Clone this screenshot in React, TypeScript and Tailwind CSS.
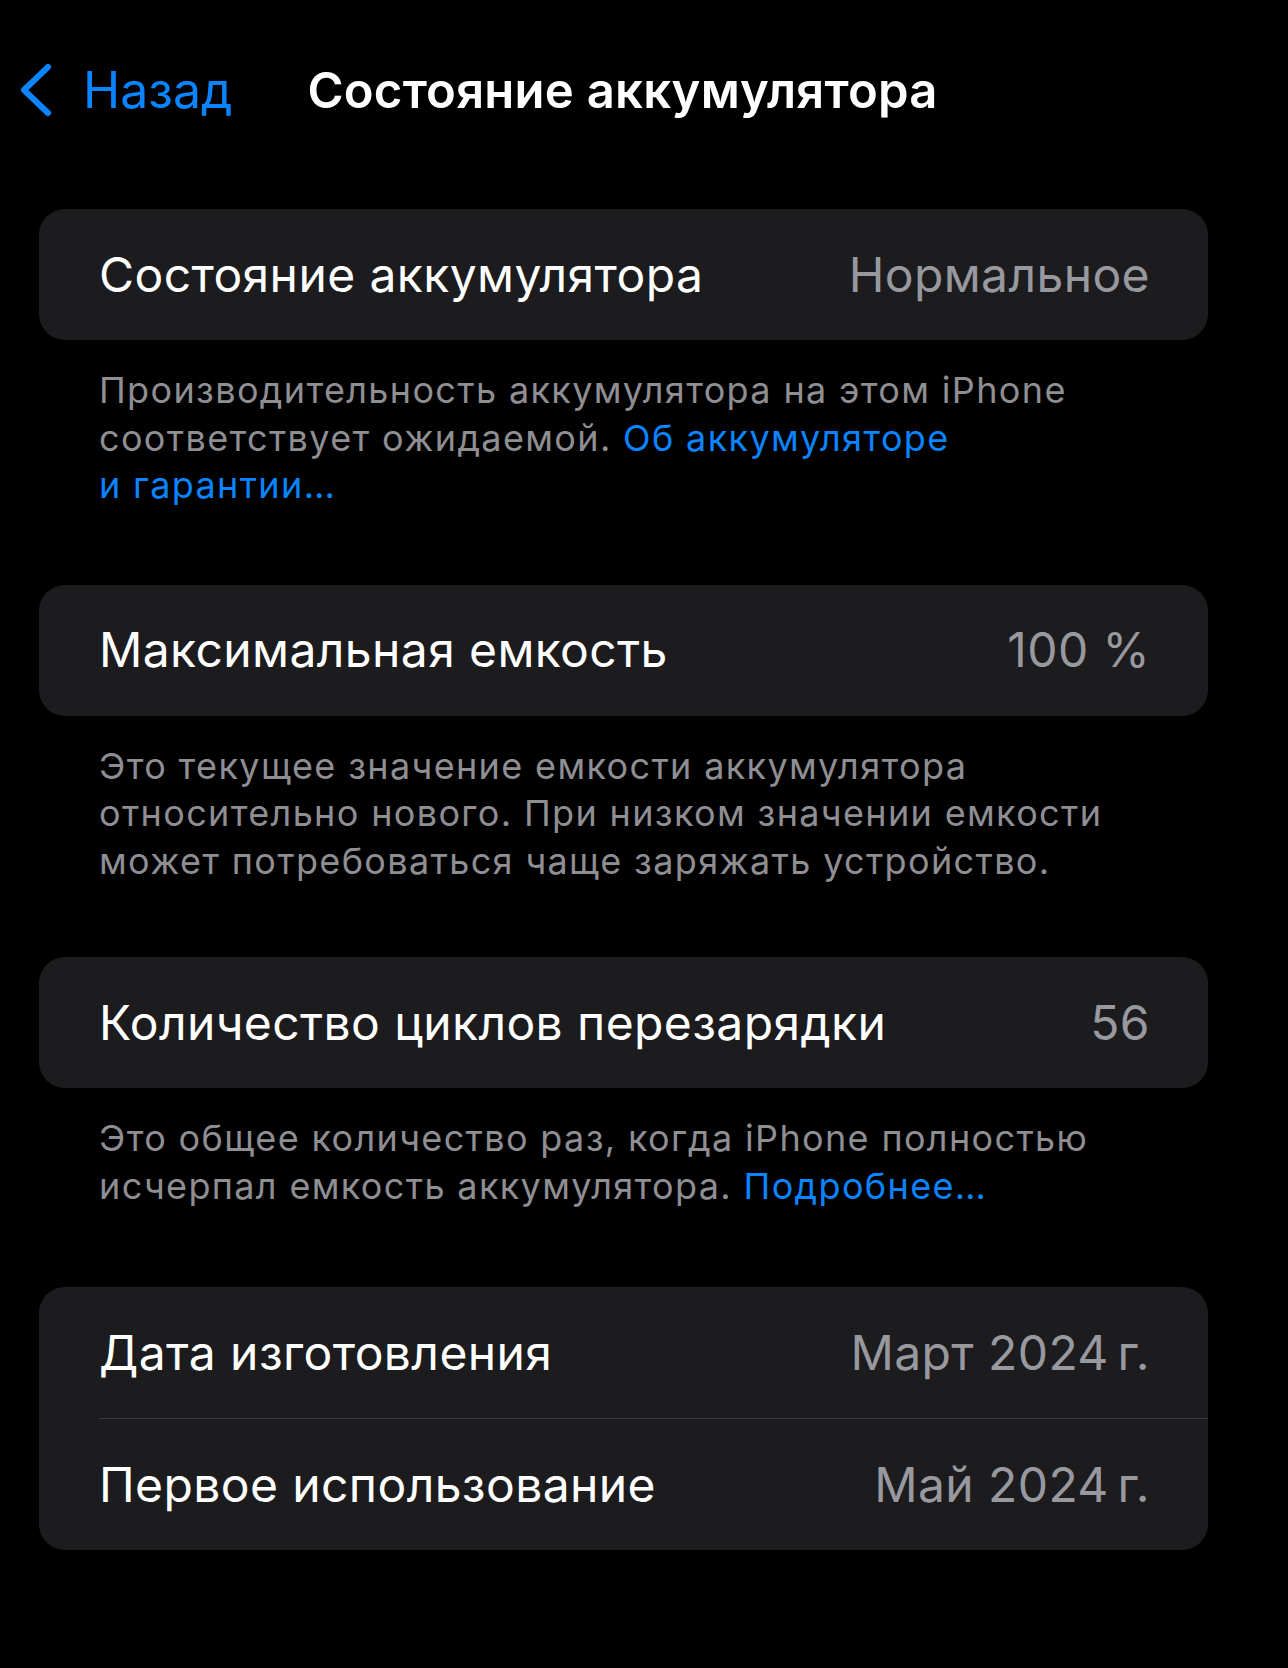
import React from 'react';

const font = { fontFamily: 'Inter, "Noto Sans", sans-serif' };

type Row = { label: string; value: string };

function Card({ rows }: { rows: Row[] }) {
  return (
    <div className="ml-[39px] w-[1169px] overflow-hidden rounded-[26px] bg-[#1c1c1e]">
      {rows.map((r, i) => (
        <div key={r.label}>
          {i > 0 && <div className="ml-[60px] h-px bg-[#38383a]" />}
          <div className="flex h-[131px] items-center justify-between pl-[60px] pr-[58px]">
            <span className="text-[48px] leading-none tracking-[0.4px] text-white">{r.label}</span>
            <span className="text-[48px] leading-none tracking-[0.4px] text-[#98989f]">{r.value}</span>
          </div>
        </div>
      ))}
    </div>
  );
}

function Footer({ children }: { children: React.ReactNode }) {
  return (
    <p className="ml-[99px] mt-[27px] w-[1100px] text-[36px] leading-[47.5px] tracking-[1.35px] text-[#8e8e93]">
      {children}
    </p>
  );
}

function Link({ children }: { children: React.ReactNode }) {
  return <span className="text-[#0a84ff]">{children}</span>;
}

export default function App() {
  return (
    <div className="min-h-[1668px] w-full bg-black pb-10" style={font}>
      {/* nav bar */}
      <header className="box-content flex h-[60px] items-center pt-[60px]">
        <svg className="ml-[16px] h-[58px] w-[38px]" viewBox="0 0 38 58" fill="none">
          <path d="M32 6 L8 29 L32 52" stroke="#0a84ff" strokeWidth="6" strokeLinecap="round" strokeLinejoin="round" />
        </svg>
        <span className="ml-[29px] text-[50px] leading-none text-[#0a84ff]">Назад</span>
        <span className="ml-[75px] text-[49px] font-semibold leading-none tracking-[0.25px] text-white">
          Состояние аккумулятора
        </span>
      </header>

      <div className="mt-[89px]">
        <Card rows={[{ label: 'Состояние аккумулятора', value: 'Нормальное' }]} />
        <Footer>
          Производительность аккумулятора на этом iPhone
          <br />
          соответствует ожидаемой. <Link>Об аккумуляторе</Link>
          <br />
          <Link>и гарантии…</Link>
        </Footer>
      </div>

      <div className="mt-[75px]">
        <Card rows={[{ label: 'Максимальная емкость', value: '100 %' }]} />
        <Footer>
          Это текущее значение емкости аккумулятора
          <br />
          относительно нового. При низком значении емкости
          <br />
          может потребоваться чаще заряжать устройство.
        </Footer>
      </div>

      <div className="mt-[72px]">
        <Card rows={[{ label: 'Количество циклов перезарядки', value: '56' }]} />
        <Footer>
          Это общее количество раз, когда iPhone полностью
          <br />
          исчерпал емкость аккумулятора. <Link>Подробнее…</Link>
        </Footer>
      </div>

      <div className="mt-[77px]">
        <Card
          rows={[
            { label: 'Дата изготовления', value: 'Март 2024\u202Fг.' },
            { label: 'Первое использование', value: 'Май 2024\u202Fг.' },
          ]}
        />
      </div>
    </div>
  );
}
